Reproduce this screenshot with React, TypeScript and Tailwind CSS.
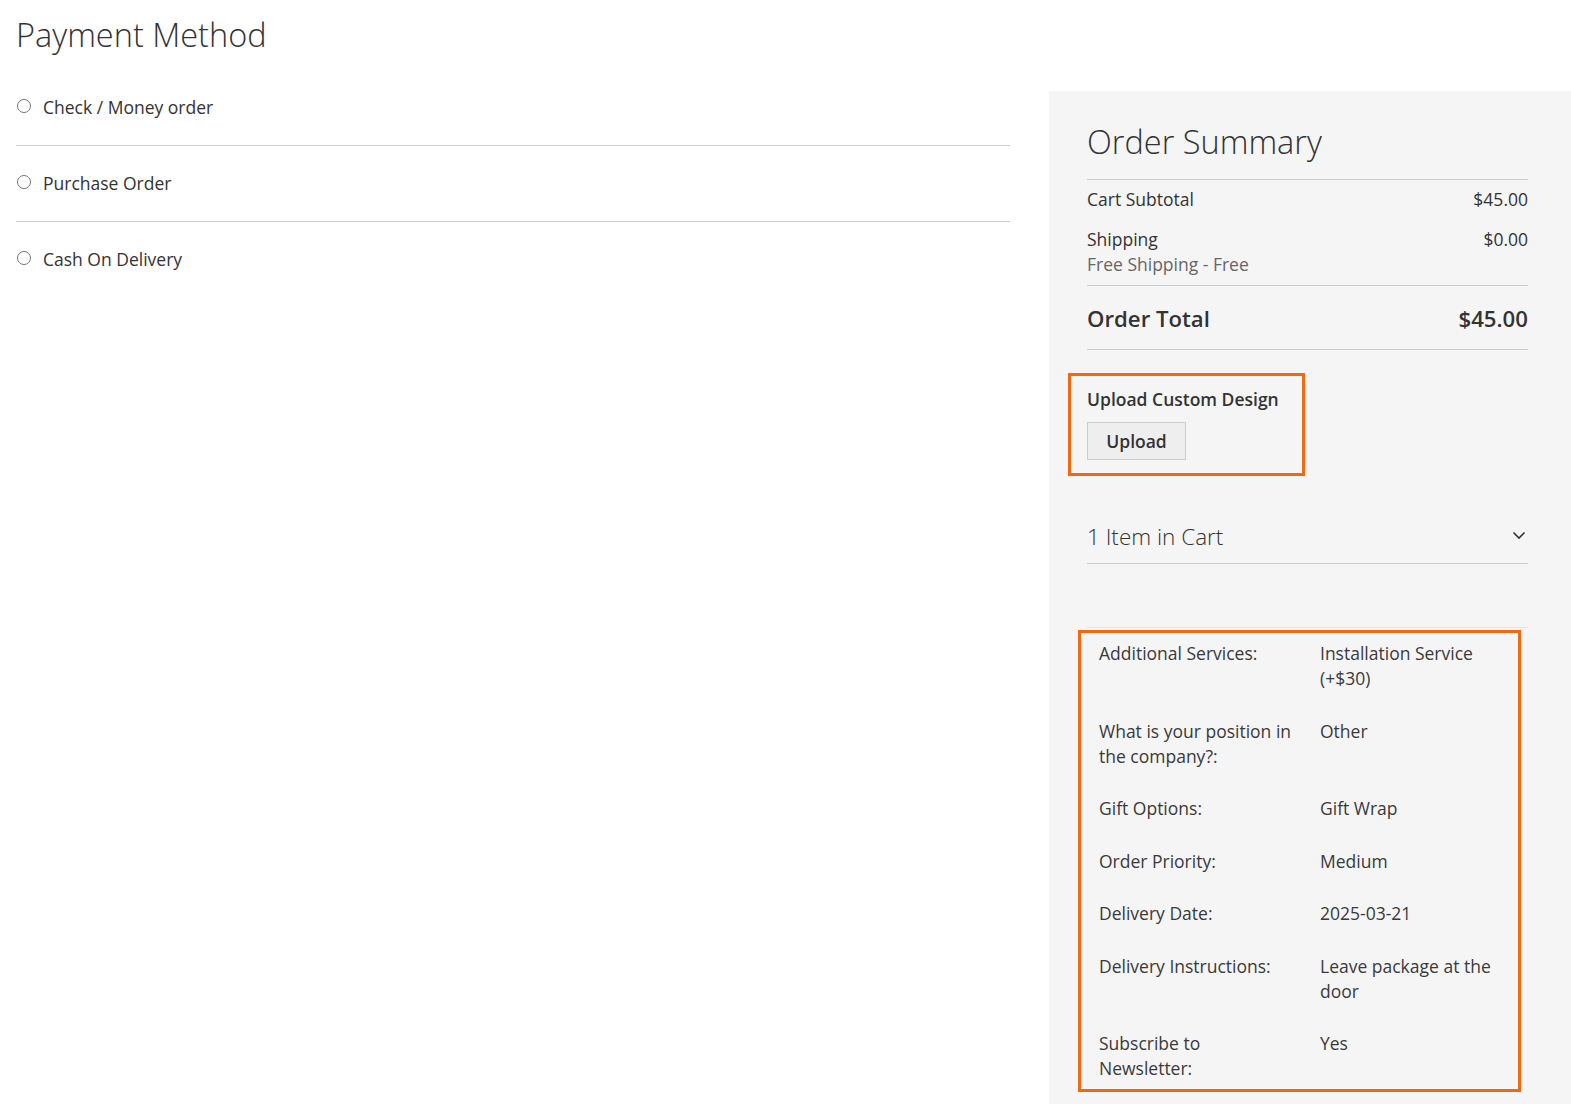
import React from "react";

const font = { fontFamily: '"Open Sans", "Noto Sans", sans-serif' };

const methods = ["Check / Money order", "Purchase Order", "Cash On Delivery"];

const details: [string, string][] = [
    ["Additional Services:", "Installation Service (+$30)"],
    ["What is your position in the company?:", "Other"],
    ["Gift Options:", "Gift Wrap"],
    ["Order Priority:", "Medium"],
    ["Delivery Date:", "2025-03-21"],
    ["Delivery Instructions:", "Leave package at the door"],
    ["Subscribe to Newsletter:", "Yes"],
];

function PaymentMethods() {
    return (
        <div className="flex-1 pl-4 pr-0">
            <h1 className="pt-[15px] text-[32.5px] font-light leading-[1.2] text-[#333]">Payment Method</h1>
            <div className="mt-[16px] w-[994px]">
                {methods.map((m, i) => (
                    <div
                        key={m}
                        className={`flex items-center py-[25px] ${i < methods.length - 1 ? "border-b border-[#cccccc]" : ""}`}
                    >
                        <span className="ml-px mr-[12px] -mt-[3px] h-[14px] w-[14px] rounded-full border border-[#767676] bg-white" />
                        <span className="text-[17.5px] leading-[25px] text-[#333]">{m}</span>
                    </div>
                ))}
            </div>
        </div>
    );
}

function OrderSummary() {
    return (
        <aside className="mt-[91px] min-h-[1013px] w-[522px] shrink-0 bg-[#f5f5f5] pl-[38px] pr-[43px] pt-[31px] text-[#333]">
            <h2 className="border-b border-[#cccccc] pb-[18px] text-[32.5px] font-light leading-[1.2]">Order Summary</h2>

            <div className="border-b border-[#cccccc] pb-[8px] pt-[7px] text-[17.5px] leading-[25px]">
                <div className="flex justify-between">
                    <span>Cart Subtotal</span>
                    <span>$45.00</span>
                </div>
                <div className="mt-[15px] flex justify-between">
                    <div>
                        <div>Shipping</div>
                        <div className="text-[#666]">Free Shipping - Free</div>
                    </div>
                    <span>$0.00</span>
                </div>
            </div>

            <div className="flex justify-between border-b border-[#cccccc] pb-[15px] pt-[18px] text-[22.2px] font-semibold leading-[30px]">
                <span>Order Total</span>
                <span>$45.00</span>
            </div>

            <div className="-ml-[19px] mt-[23px] w-[237px] border-[3px] border-[#f26a0f] pb-[13px] pl-[16px] pt-[11px]">
                <div className="text-[17.5px] font-semibold leading-[25px]">Upload Custom Design</div>
                <button className="mt-[10px] h-[38px] w-[99px] border border-[#cccccc] bg-[#eeeeee] text-[17.5px] font-semibold text-[#333]">
                    Upload
                </button>
            </div>

            <div className="mt-[47px] flex items-center justify-between border-b border-[#cccccc] pb-[13px]">
                <span className="text-[22.5px] font-light leading-[27px]">1 Item in Cart</span>
                <svg width="16" height="10" viewBox="0 0 16 10" className="mr-[1px] -mt-[4px]" fill="none">
                    <path d="M2.5 2.5l5.5 5.5 5.5-5.5" stroke="#333" strokeWidth="1.6" />
                </svg>
            </div>

            <div className="mt-[63px] border-t border-[#e3e3e3]" />

            <div className="-ml-[9px] mt-[2px] w-[443px] border-[3px] border-[#f26a0f] pb-[8px] pl-[18px] pt-[8px] text-[17.5px] leading-[25px] text-[#3a3a3a]">
                <div className="grid grid-cols-[221px_180px] gap-y-[27.5px]">
                    {details.map(([k, v]) => (
                        <React.Fragment key={k}>
                            <div className="w-[196px]">{k}</div>
                            <div>{v}</div>
                        </React.Fragment>
                    ))}
                </div>
            </div>
        </aside>
    );
}

export default function App() {
    return (
        <div style={font} className="flex min-h-[1104px] w-[1571px] gap-[39px] bg-white">
            <PaymentMethods />
            <OrderSummary />
        </div>
    );
}
